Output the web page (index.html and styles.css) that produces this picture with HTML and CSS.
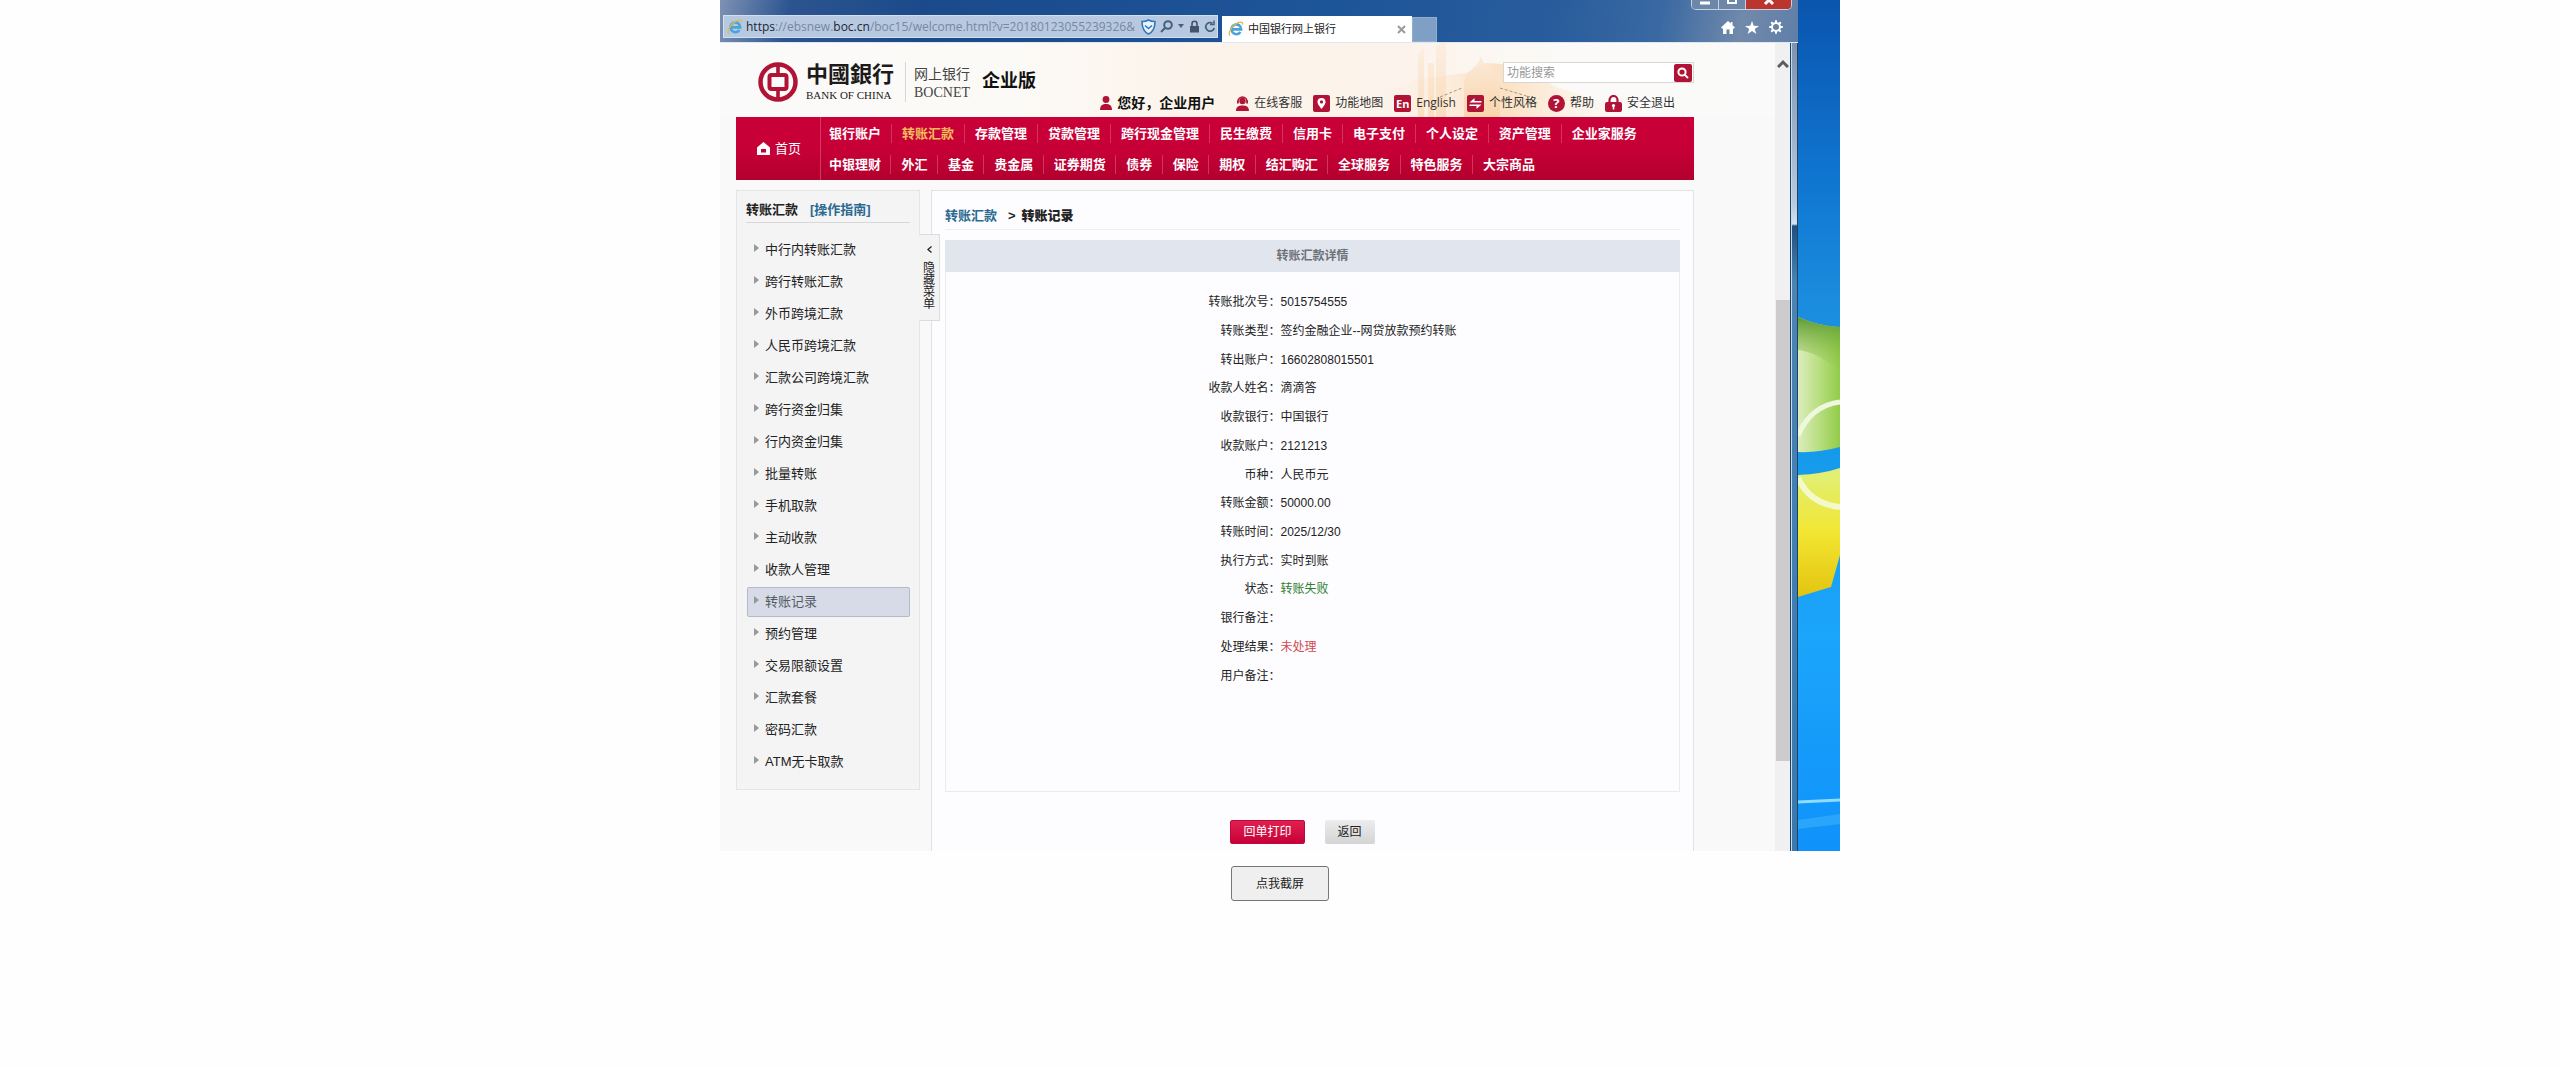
FILE: index.html
```html
<!DOCTYPE html>
<html lang="zh-CN">
<head>
<meta charset="utf-8">
<title>中国银行网上银行</title>
<link rel="stylesheet" href="styles.css">
</head>
<body>
<svg class="defs" width="0" height="0" aria-hidden="true">
  <symbol id="ie" viewBox="0 0 16 16">
    <path d="M3.6 8.4H13.2A4.9 4.9 0 1 0 12.4 11" fill="none" stroke="#4aa3dc" stroke-width="2.6"/>
    <path d="M2.2 14.6C-.6 12.6 3 5.6 8.6 2.4 12 .5 15.2.4 14.6 3.6" fill="none" stroke="#e3b844" stroke-width="1.3"/>
  </symbol>
</svg>
<main>
<div class="desktop">
  <div class="browser">
    <div class="chrome">
      <div class="address">
        <svg class="ie" aria-hidden="true"><use href="#ie"/></svg>
        <div class="url" role="textbox" contenteditable="true" spellcheck="false" aria-label="地址"><b>https</b>://ebsnew.<b>boc.cn</b>/boc15/welcome.html?v=20180123055239326&amp;</div>
        <div class="address-tools">
          <svg width="15" height="16" viewBox="0 0 15 16" aria-hidden="true"><path d="M7.500 1C5.500 2.200 3 2.600 1 2.500 1 8 2 12.500 7.500 15 13 12.500 14 8 14 2.500 12 2.600 9.500 2.200 7.500 1Z" fill="#e6f1fa" stroke="#3579b8" stroke-width="1.600"/><path d="M4 6.500 7.500 9.500 11 6.500" fill="none" stroke="#3579b8" stroke-width="1.600"/></svg>
          <svg width="13" height="13" viewBox="0 0 13 13" fill="none" stroke="#46607f" stroke-width="2" aria-hidden="true"><circle cx="8" cy="5" r="3.800"/><path d="M5.200 7.800 1 12"/></svg>
          <svg width="8" height="5" viewBox="0 0 8 5" aria-hidden="true"><path d="M1 0H7L4 4Z" fill="#46607f"/></svg>
          <svg width="11" height="13" viewBox="0 0 11 13" aria-hidden="true"><rect x="1" y="6" width="9" height="6.500" fill="#46546a"/><path d="M3 6V3.800a2.500 2.500 0 0 1 5 0V6" fill="none" stroke="#46546a" stroke-width="1.600"/></svg>
          <svg width="12" height="13" viewBox="0 0 12 13" fill="none" stroke="#46607f" stroke-width="1.800" aria-hidden="true"><path d="M10.200 8A4.300 4.300 0 1 1 8.500 3.300"/><path d="M6 4.600H10V.6" stroke-width="1.500"/></svg>
        </div>
      </div>
      <div class="tab">
        <svg class="ie" aria-hidden="true"><use href="#ie"/></svg>
        <span>中国银行网上银行</span>
        <button class="tab-close" aria-label="关闭选项卡"><svg width="9" height="9" viewBox="0 0 9 9"><path d="M1 1 8 8M8 1 1 8" stroke="#9a9a9a" stroke-width="2"/></svg></button>
      </div>
      <button class="new-tab" aria-label="新建选项卡"></button>
      <div class="chrome-tools">
        <svg width="14" height="13" viewBox="0 0 14 13" aria-hidden="true"><path d="M7 0 0 6.500 1.300 7.800 2 7.200V13H5.500V8.500H8.500V13H12V7.200L12.700 7.800 14 6.500 11.500 4.200V1H9.800V2.600Z" fill="#fff"/></svg>
        <svg width="14" height="13" viewBox="0 0 14 13" aria-hidden="true"><path d="M7 0 8.700 4.700 14 4.900 9.800 8 11.300 13 7 10.100 2.700 13 4.200 8 0 4.900 5.300 4.700Z" fill="#fff"/></svg>
        <svg width="14" height="14" viewBox="0 0 14 14" fill="none" stroke="#fff" aria-hidden="true"><circle cx="7" cy="7" r="4" stroke-width="2"/><path d="M7 .2V3M7 11V13.800M.2 7H3M11 7H13.800M2.200 2.200 4 4M10 10 11.800 11.800M2.200 11.800 4 10M10 4 11.800 2.200" stroke-width="2"/></svg>
      </div>
      <div class="window-buttons">
        <button aria-label="最小化"><svg width="10" height="8" viewBox="0 0 10 8"><path d="M0 3H10" stroke="#fff" stroke-width="3"/></svg></button>
        <button aria-label="最大化"><svg width="10" height="8" viewBox="0 0 10 8"><path d="M1 0V3H9V0" fill="none" stroke="#fff" stroke-width="2"/></svg></button>
        <button class="window-close" aria-label="关闭"><svg width="12" height="8" viewBox="0 0 12 8"><path d="M2 4 6 0 10 4" fill="none" stroke="#fff" stroke-width="3"/></svg></button>
      </div>
    </div>
    <div class="viewport">
      <div class="page">
        <header class="header">
          <svg class="skyline" viewBox="0 0 300 74" aria-hidden="true">
            <defs>
              <linearGradient id="haze" x1="0" x2="1"><stop offset="0" stop-color="#fbe6d2" stop-opacity="0"/><stop offset=".5" stop-color="#fbdcb8" stop-opacity=".8"/><stop offset="1" stop-color="#fdf0e2" stop-opacity="0"/></linearGradient>
              <linearGradient id="tower" x1="0" x2="0" y1="0" y2="1"><stop offset="0" stop-color="#fbeadb"/><stop offset="1" stop-color="#f9d3a8"/></linearGradient>
            </defs>
            <path d="M20 74V52L60 36 110 30 130 20 165 22 200 44 240 56 280 74Z" fill="url(#haze)"/>
            <path d="M62 74V12L68 4V74ZM72 74V20H78V74ZM80 74V3L84 0H90V74Z" fill="url(#tower)" opacity=".6"/>
            <path d="M108 74V40C110 26 122 26 125 13 128 26 142 28 144 40V74Z" fill="url(#tower)" opacity=".9"/>
            <path d="M84 54 106 45M144 45 174 54" stroke="#8c7458" stroke-dasharray="3 2" opacity=".7"/>
          </svg>
          <div class="brand">
            <svg class="emblem" width="40" height="40" viewBox="0 0 40 40" aria-hidden="true"><circle cx="20" cy="20" r="17.500" fill="none" stroke="#b01335" stroke-width="4.500"/><rect x="11.500" y="13" width="17" height="14" rx="2" fill="none" stroke="#b01335" stroke-width="4"/><path d="M20 2V12M20 28V38" stroke="#b01335" stroke-width="3.600"/></svg>
            <div class="brand-name"><span class="brush">中國銀行</span><span class="latin">BANK OF CHINA</span></div>
            <div class="brand-net"><span>网上银行</span><span class="latin">BOCNET</span></div>
            <strong class="edition">企业版</strong>
          </div>
          <div class="header-side">
            <form class="search"><input type="text" placeholder="功能搜索" aria-label="功能搜索"><button type="button" aria-label="搜索"><svg width="12" height="12" viewBox="0 0 12 12" fill="none" stroke="#fff" stroke-width="2"><circle cx="5" cy="5" r="3.600"/><path d="M7.600 7.600 11 11"/></svg></button></form>
            <nav class="utility" aria-label="快捷功能">
              <span class="hello"><svg width="12" height="14" viewBox="0 0 12 14" aria-hidden="true"><circle cx="6" cy="3.500" r="3.400" fill="#b01335"/><path d="M0 14C0 9.500 2.500 8 6 8S12 9.500 12 14Z" fill="#b01335"/></svg>您好，企业用户</span>
              <a href="#"><svg width="13" height="15" viewBox="0 0 13 15" aria-hidden="true"><circle cx="6.500" cy="5" r="3.200" fill="#b01335"/><path d="M2 5.500A4.500 4.500 0 0 1 11 5.500" fill="none" stroke="#b01335" stroke-width="1.500"/><path d="M1 4.500H2.800V7.500H1ZM10.200 4.500H12V7.500H10.200ZM0 15C0 10.500 3 9.500 6.500 9.500S13 10.500 13 15Z" fill="#b01335"/></svg>在线客服</a>
              <a href="#"><svg width="17" height="17" viewBox="0 0 17 17" aria-hidden="true"><rect width="17" height="17" rx="2" fill="#b01335"/><path d="M8.500 14C5.500 10 4.500 8.600 4.500 6.900a4 4 0 0 1 8 0C12.500 8.600 11.500 10 8.500 14Z" fill="#fff"/><circle cx="8.500" cy="6.900" r="1.600" fill="#b01335"/></svg>功能地图</a>
              <a class="latin-label" href="#"><i class="badge">En</i>English</a>
              <a href="#"><svg width="17" height="17" viewBox="0 0 17 17" aria-hidden="true"><rect width="17" height="17" rx="2" fill="#b01335"/><path d="M2.500 7.500 7.500 3V6H14.500V7.500ZM14.500 9.500 9.500 14V11H2.500V9.500Z" fill="#fff"/></svg>个性风格</a>
              <a href="#"><i class="badge round">?</i>帮助</a>
              <a href="#"><svg width="17" height="17" viewBox="0 0 17 17" aria-hidden="true"><rect y="7" width="17" height="10" rx="2" fill="#b01335"/><path d="M4.500 8V5a4 4 0 0 1 8 0V8" fill="none" stroke="#b01335" stroke-width="2.200"/><circle cx="8.500" cy="10.500" r="1.600" fill="#fff"/><path d="M8.500 10.500V14.500" stroke="#fff" stroke-width="1.600"/></svg>安全退出</a>
            </nav>
          </div>
        </header>
        <nav class="main-nav" aria-label="主导航">
          <a class="home" href="#"><svg width="13" height="13" viewBox="0 0 13 13" aria-hidden="true"><path d="M6.500 0 0 5.500V13H13V5.500Z" fill="#fff"/><rect x="4" y="7" width="5" height="3.500" fill="#c40034"/></svg>首页</a>
          <div class="nav-rows">
            <ul class="row-a"><li><a href="#">银行账户</a></li><li><a class="current" href="#">转账汇款</a></li><li><a href="#">存款管理</a></li><li><a href="#">贷款管理</a></li><li><a href="#">跨行现金管理</a></li><li><a href="#">民生缴费</a></li><li><a href="#">信用卡</a></li><li><a href="#">电子支付</a></li><li><a href="#">个人设定</a></li><li><a href="#">资产管理</a></li><li><a href="#">企业家服务</a></li></ul>
            <ul class="row-b"><li><a href="#">中银理财</a></li><li><a href="#">外汇</a></li><li><a href="#">基金</a></li><li><a href="#">贵金属</a></li><li><a href="#">证券期货</a></li><li><a href="#">债券</a></li><li><a href="#">保险</a></li><li><a href="#">期权</a></li><li><a href="#">结汇购汇</a></li><li><a href="#">全球服务</a></li><li><a href="#">特色服务</a></li><li><a href="#">大宗商品</a></li></ul>
          </div>
        </nav>
        <div class="columns">
          <aside class="sidebar">
            <h2>转账汇款 <a href="#">[操作指南]</a></h2>
            <ul>
              <li><a href="#">中行内转账汇款</a></li>
              <li><a href="#">跨行转账汇款</a></li>
              <li><a href="#">外币跨境汇款</a></li>
              <li><a href="#">人民币跨境汇款</a></li>
              <li><a href="#">汇款公司跨境汇款</a></li>
              <li><a href="#">跨行资金归集</a></li>
              <li><a href="#">行内资金归集</a></li>
              <li><a href="#">批量转账</a></li>
              <li><a href="#">手机取款</a></li>
              <li><a href="#">主动收款</a></li>
              <li><a href="#">收款人管理</a></li>
              <li><a class="selected" href="#">转账记录</a></li>
              <li><a href="#">预约管理</a></li>
              <li><a href="#">交易限额设置</a></li>
              <li><a href="#">汇款套餐</a></li>
              <li><a href="#">密码汇款</a></li>
              <li><a href="#">ATM无卡取款</a></li>
            </ul>
            <button class="collapse"><svg width="5" height="7" viewBox="0 0 5 7" aria-hidden="true"><path d="M4.500 .5 1 3.500 4.500 6.500" fill="none" stroke="#222" stroke-width="1.300"/></svg><span>隐藏菜单</span></button>
          </aside>
          <section class="content">
            <div class="crumbs"><a href="#">转账汇款</a><span>&gt;</span><b>转账记录</b></div>
            <div class="detail">
              <h3>转账汇款详情</h3>
              <dl>
                <dt>转账批次号：</dt><dd>5015754555</dd>
                <dt>转账类型：</dt><dd>签约金融企业--网贷放款预约转账</dd>
                <dt>转出账户：</dt><dd>16602808015501</dd>
                <dt>收款人姓名：</dt><dd>滴滴答</dd>
                <dt>收款银行：</dt><dd>中国银行</dd>
                <dt>收款账户：</dt><dd>2121213</dd>
                <dt>币种：</dt><dd>人民币元</dd>
                <dt>转账金额：</dt><dd>50000.00</dd>
                <dt>转账时间：</dt><dd>2025/12/30</dd>
                <dt>执行方式：</dt><dd>实时到账</dd>
                <dt>状态：</dt><dd class="status">转账失败</dd>
                <dt>银行备注：</dt><dd></dd>
                <dt>处理结果：</dt><dd class="pending">未处理</dd>
                <dt>用户备注：</dt><dd></dd>
              </dl>
            </div>
            <div class="actions"><button class="print">回单打印</button><button class="back">返回</button></div>
          </section>
        </div>
      </div>
      <div class="scrollbar"><svg width="12" height="9" viewBox="0 0 12 9" aria-hidden="true"><path d="M1 8 6 3 11 8" fill="none" stroke="#5c5c5c" stroke-width="3"/></svg><div class="thumb"></div></div>
      <div class="frame"></div>
    </div>
  </div>
  <svg class="wallpaper" viewBox="0 0 42 851" preserveAspectRatio="none" aria-hidden="true">
    <defs>
      <linearGradient id="sky" x1="0" x2="0" y1="0" y2="1"><stop offset="0" stop-color="#0a55ae"/><stop offset=".2" stop-color="#0f74cf"/><stop offset=".36" stop-color="#1b8ddf"/><stop offset=".54" stop-color="#159aec"/><stop offset=".75" stop-color="#1ba5fb"/><stop offset="1" stop-color="#0f92fa"/></linearGradient>
      <linearGradient id="green" x1="0" x2="1" y1="0" y2="0"><stop offset="0" stop-color="#dcedbd"/><stop offset=".5" stop-color="#b8de80"/><stop offset="1" stop-color="#92cc48"/></linearGradient>
      <linearGradient id="leaf" x1="0" x2="0" y1="0" y2="1"><stop offset="0" stop-color="#5e9a34"/><stop offset="1" stop-color="#8cc444" stop-opacity="0"/></linearGradient>
      <linearGradient id="yellow" x1="0" x2="0" y1="0" y2="1"><stop offset="0" stop-color="#dff07a"/><stop offset=".5" stop-color="#f2e632"/><stop offset="1" stop-color="#e3c410"/></linearGradient>
    </defs>
    <rect width="42" height="851" fill="url(#sky)"/>
    <path d="M0 317Q20 326 42 327V447Q20 453 0 452Z" fill="url(#green)"/>
    <path d="M0 317Q20 326 42 327V372Q20 352 0 350Z" fill="url(#leaf)"/>
    <path d="M0 436Q12 406 42 402" fill="none" stroke="#eef8dc" stroke-width="5"/>
    <path d="M0 475Q24 474 42 468V555L33 587Q16 592 0 597Z" fill="url(#yellow)"/>
    <path d="M0 478Q12 504 42 507" fill="none" stroke="#f4f9cc" stroke-width="6"/>
    <path d="M0 802 42 800" stroke="#8fdcff" stroke-width="3"/>
    <path d="M0 820 42 814V824L0 829Z" fill="#3bb2fb" opacity=".6"/>
  </svg>
</div>
<button class="capture">点我截屏</button>
</main>
</body>
</html>
```
FILE: styles.css
```css
* { box-sizing: border-box; }
body { margin: 0; background: #fefefe; color: #222; font: 13px/20px "Liberation Sans", "Noto Sans CJK SC", sans-serif; }
a { color: inherit; text-decoration: none; }
ul, dl, dd, h2, h3 { margin: 0; padding: 0; list-style: none; }
button, input { font: inherit; color: inherit; border: 0; padding: 0; }
svg { display: block; flex: none; }
i { font-style: normal; }
.defs { position: absolute; }
main { display: flex; flex-direction: column; align-items: center; gap: 15px; }

.desktop { display: flex; width: 100%; max-width: 1120px; }
.browser { flex: 1; min-width: 0; display: flex; flex-direction: column; }
.wallpaper { width: 42px; height: auto; align-self: stretch; }

.chrome { position: relative; display: flex; align-items: flex-end; height: 43px; padding: 0 6px 0 3px; background: linear-gradient(100deg, #7d92b3 0, #2c5490 70px, #1b4a8a 200px, #1d5599 600px, #285c9c 820px, #3a69a2 930px, #7189ab 1010px, #5f7fa8 100%); border-bottom: 1px solid #dfe8f2; }
.address { display: flex; align-items: center; flex: 0 1 495px; min-width: 0; height: 23px; margin-bottom: 4px; padding: 0 1px 0 3px; background: #b7c9e1; border: 1px solid #d3dfee; }
.ie { width: 16px; height: 16px; }
.url { flex: 1; min-width: 0; margin-left: 3px; overflow: hidden; white-space: nowrap; color: #76879e; font: 12px/20px "Open Sans", sans-serif; }
.url b { color: #1b2636; font-weight: 400; }
.address-tools { display: flex; align-items: center; gap: 4px; }
.tab { display: flex; align-items: center; gap: 4px; flex: 0 1 190px; height: 26px; margin-left: 4px; padding: 0 6px; background: #fff; font-size: 11px; white-space: nowrap; }
.tab-close { margin-left: auto; background: none; }
.new-tab { width: 25px; height: 25px; background: #7f9fc5; border: 1px solid #93aecd; }
.chrome-tools { display: flex; align-items: center; gap: 10px; margin-left: auto; padding-bottom: 8px; margin-right: 9px; }
.window-buttons { position: absolute; top: 0; right: 6px; display: flex; height: 10px; border: 1px solid #c4d1e1; border-top: 0; border-radius: 0 0 5px 5px; overflow: hidden; }
.window-buttons button { display: flex; justify-content: center; width: 27px; background: #6d87a9; border-right: 1px solid #c4d1e1; }
.window-buttons .window-close { width: 45px; background: #b9352e; border: 0; }

.viewport { flex: 1; display: flex; }
.page { flex: 1; min-width: 0; display: flex; flex-direction: column; padding: 0 81px 0 16px; background: #faf9fa; }
.scrollbar { width: 15px; padding: 16px 0 0 1px; background: #f1f0f1; }
.scrollbar svg { margin-left: 1px; }
.thumb { height: 461px; margin-top: 232px; background: #cdcbcc; }
.frame { width: 8px; border: solid #1d4468; border-width: 0 1px; background: linear-gradient(#7d93b0 0, #b8cade 160px, #d5e2ef 181px, #1f4f80 183px, #4b84b4 240px, #3a78ae 100%); box-shadow: inset 1px 0 #c2dcee; }

.header { position: relative; display: flex; justify-content: space-between; height: 74px; margin: 0 -81px 0 -16px; padding: 0 81px 0 38px; background: linear-gradient(90deg, #fafafa 0, #fcfaf6 300px, #fcf3ea 480px, #fcf4ec 700px, #fbfaf8 850px, #fafafa 100%); }
.skyline { position: absolute; right: 119px; top: 0; width: 300px; height: 74px; }
.brand { display: flex; align-items: center; height: 78px; }
.brand > div { display: flex; flex-direction: column; }
.brand-name { margin-left: 8px; padding-right: 11px; border-right: 1px solid #d8d6d6; color: #1d1a1b; }
.brush { font-size: 22px; line-height: 26px; font-weight: 700; }
.latin { font-family: "Liberation Serif", serif; font-size: 11px; line-height: 14px; white-space: nowrap; }
.brand-net { margin-left: 8px; color: #444; font-size: 14px; gap: 2px; }
.brand-net .latin { font-size: 14px; }
.edition { margin: -2px 0 0 12px; color: #111; font-size: 18px; }
.header-side { position: relative; display: flex; flex-direction: column; align-items: flex-end; gap: 10px; padding-top: 19px; }
.search { display: flex; align-items: center; width: 191px; height: 21px; padding-right: 1px; background: #fff; border: 1px solid #d9d7d5; }
.search input { flex: 1; min-width: 0; padding-left: 3px; background: none; font-size: 12px; }
.search input::placeholder { color: #999; opacity: 1; }
.search button { display: grid; place-items: center; width: 18px; height: 18px; border-radius: 2px; background: #b01335; }
.utility { display: flex; align-items: center; gap: 11px; margin-right: 19px; color: #333; font-size: 12px; white-space: nowrap; }
.utility > * { display: flex; align-items: center; gap: 5px; }
.hello { margin-right: 10px; color: #111; font-size: 14px; font-weight: 700; }
.latin-label { font-family: "Open Sans", sans-serif; }
.badge { width: 17px; height: 17px; border-radius: 2px; background: #b01335; color: #fff; font: 700 11px/17px "Open Sans", sans-serif; text-align: center; }
.round { border-radius: 50%; font-size: 13px; }

.main-nav { display: flex; height: 63px; background: linear-gradient(#ca0038, #c60036 55%, #b2002e); color: #fff; white-space: nowrap; }
.home { display: flex; align-items: center; gap: 5px; width: 85px; padding-left: 21px; border-right: 1px solid #d13a62; }
.nav-rows { flex: 1; min-width: 0; padding-left: 8px; }
.nav-rows ul { display: flex; justify-content: space-between; font-weight: 700; line-height: 31px; }
.row-a { padding-right: 57px; padding-top: 1px; }
.row-b { padding-right: 159px; }
.nav-rows li { position: relative; }
.nav-rows li + li::before { content: ""; position: absolute; left: -11px; top: 6px; height: 19px; border-left: 1px solid #d0355c; }
.current { color: #f2bd5c; }

.columns { flex: 1; display: flex; align-items: flex-start; gap: 11px; padding-top: 10px; }
.sidebar { position: relative; flex: 0 0 184px; padding: 9px; background: #f4f4f5; border: 1px solid #e6e5e6; height: 600px; }
.sidebar h2 { display: flex; gap: 12px; padding-bottom: 2px; border-bottom: 1px solid #d9d8d9; font-size: 13px; line-height: 20px; }
.sidebar h2 a, .crumbs a { color: #2b6a91; }
.sidebar ul { display: flex; flex-direction: column; gap: 2px; padding: 12px 0 0 1px; }
.sidebar li a { display: flex; align-items: center; gap: 6px; height: 30px; padding-left: 6px; border: 1px solid transparent; border-radius: 2px; }
.sidebar li a::before { content: ""; margin-top: -4px; border: solid transparent; border-width: 4px 0 4px 5px; border-left-color: #999; }
.sidebar li .selected { background: #d6dbe7; border-color: #b4bac6; color: #555b66; }
.collapse { position: absolute; z-index: 1; left: 100%; top: 43px; display: flex; flex-direction: column; align-items: center; gap: 9px; width: 21px; height: 87px; padding-top: 11px; background: #f4f3f4; border: 1px solid #dddcdd; border-left: 0; font-size: 12px; line-height: 12px; }
.collapse span { width: 12px; white-space: normal; word-break: break-all; }

.content { flex: 1; min-width: 0; padding: 14px 13px 7px; background: #fdfcfe; border: 1px solid #e2e1e4; border-bottom: 0; }
.crumbs { display: flex; gap: 10px; padding: 1px 0 3px; border-bottom: 1px solid #eeedf0; font-weight: 700; }
.crumbs span { margin-right: -4px; }
.crumbs a { margin-right: 1px; }
.detail { min-height: 552px; margin-top: 10px; border: 1px solid #ebebee; }
.detail h3 { margin: -1px; background: #e1e5ed; color: #6d7278; font-size: 12px; line-height: 32px; text-align: center; }
.detail dl { display: grid; grid-template-columns: calc(50% - 32px) 1fr; grid-auto-rows: 1fr; align-items: center; min-height: 402px; margin-top: 17px; font-size: 12px; line-height: 20px; }
.detail dt { text-align: right; }
.status { color: #2f7d32; }
.pending { color: #d14850; }
.actions { display: flex; justify-content: center; gap: 20px; margin-top: 28px; padding-right: 20px; }
.actions button { height: 24px; padding: 0 13px; border-radius: 2px; font-size: 12px; line-height: 24px; }
.actions .print { padding: 0 12px; background: linear-gradient(#e02050, #c80038); border: 1px solid #c00a3c; color: #fff; line-height: 22px; }
.actions .back { background: linear-gradient(#ececec, #d4d4d4); }
.capture { width: 98px; height: 35px; background: #efefef; border: 1px solid #767676; border-radius: 3px; font-size: 12px; }
```
